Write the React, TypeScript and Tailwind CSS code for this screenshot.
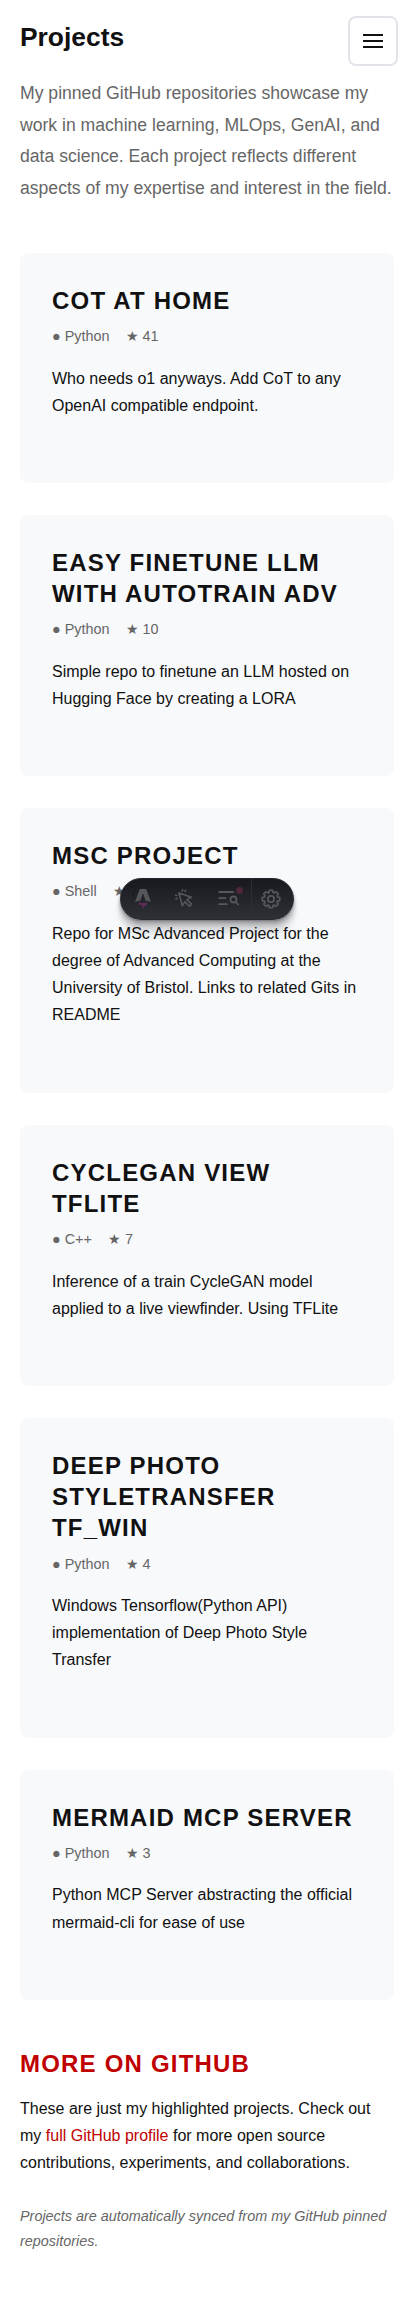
const projects = [
  { title: 'CoT at Home', language: 'Python', stars: 41, description: 'Who needs o1 anyways. Add CoT to any OpenAI compatible endpoint.' },
  { title: 'Easy finetune LLM with autotrain adv', language: 'Python', stars: 10, description: 'Simple repo to finetune an LLM hosted on Hugging Face by creating a LORA' },
  { title: 'MSc Project', language: 'Shell', stars: 7, description: 'Repo for MSc Advanced Project for the degree of Advanced Computing at the University of Bristol. Links to related Gits in README' },
  { title: 'CycleGAN View TFLite', language: 'C++', stars: 7, description: 'Inference of a train CycleGAN model applied to a live viewfinder. Using TFLite' },
  { title: 'Deep Photo StyleTransfer TF_WIN', language: 'Python', stars: 4, description: 'Windows Tensorflow(Python API) implementation of Deep Photo Style Transfer' },
  { title: 'Mermaid MCP Server', language: 'Python', stars: 3, description: 'Python MCP Server abstracting the official mermaid-cli for ease of use' },
];

type Project = (typeof projects)[number];

// Outline of an eight-toothed cog centred on (10, 10).
const cogPoints = Array.from({ length: 8 }, (_, tooth) =>
  [
    [-16, 6.9],
    [-11, 8.9],
    [11, 8.9],
    [16, 6.9],
  ]
    .map(([offset, radius]) => {
      const angle = ((tooth * 45 + offset) * Math.PI) / 180;
      return `${(10 + radius * Math.cos(angle)).toFixed(2)},${(10 + radius * Math.sin(angle)).toFixed(2)}`;
    })
    .join(' '),
).join(' ');

function ProjectCard({ title, language, stars, description }: Project) {
  return (
    <article className="rounded-lg bg-[#f8f9fb] p-8">
      <h2 className="text-2xl leading-[31.2px] font-bold tracking-[0.05em] uppercase">{title}</h2>
      <div className="mt-2 flex h-[24.48px] gap-4 text-[14.4px] leading-[24.48px] text-[#666]">
        <span>● {language}</span>
        <span>★ {stars}</span>
      </div>
      <p className="mt-4 mb-8 leading-[27.2px]">{description}</p>
    </article>
  );
}

function MenuButton() {
  return (
    <button
      aria-label="Menu"
      className="absolute top-4 right-4 flex size-[50px] flex-col items-center justify-center gap-1 rounded-lg border-2 border-[#e1e4e8] bg-white"
    >
      <span className="h-0.5 w-5 bg-[#111]" />
      <span className="h-0.5 w-5 bg-[#111]" />
      <span className="h-0.5 w-5 bg-[#111]" />
    </button>
  );
}

function Toolbar() {
  return (
    <div className="absolute top-[878px] left-[120px] flex h-[42px] w-[174px] items-center rounded-full border border-[#25282f] bg-linear-to-b from-[#13151a]/98 to-[#13151a]/88 text-[#56575a] shadow-[0_1px_2px_rgba(19,21,26,0.29),0_4px_4px_rgba(19,21,26,0.26),0_10px_6px_rgba(19,21,26,0.15),0_17px_7px_rgba(19,21,26,0.04)]">
      <div className="flex w-[44px] justify-center">
        <svg viewBox="0 0 24 24" className="size-5" aria-hidden="true">
          <path fill="#5f2c5a" d="M8.358 20.162c-1.186-1.07-1.532-3.316-1.038-4.944.856 1.026 2.043 1.352 3.272 1.535 1.897.283 3.76.177 5.522-.678.202-.098.388-.229.608-.36.166.473.209.95.151 1.437-.14 1.185-.738 2.1-1.688 2.794-.38.277-.782.525-1.175.787-1.205.804-1.531 1.747-1.078 3.119l.044.148a3.158 3.158 0 0 1-1.407-1.188 3.31 3.31 0 0 1-.544-1.815c-.004-.32-.004-.642-.048-.958-.106-.769-.472-1.113-1.161-1.133-.707-.02-1.267.411-1.415 1.09-.012.053-.028.104-.045.165z" />
          <path fill="currentColor" d="M2.397 15.717s3.24-1.575 6.49-1.575l2.451-7.565c.092-.366.36-.614.662-.614.302 0 .57.248.662.614l2.45 7.565c3.85 0 6.491 1.575 6.491 1.575L16.088.727C15.93.285 15.663 0 15.303 0H8.697c-.36 0-.615.285-.784.727l-5.516 14.99z" />
        </svg>
      </div>
      <div className="flex w-[38px] justify-center">
        <svg viewBox="0 0 20 20" className="size-5" fill="none" stroke="currentColor" strokeWidth="1.6" strokeLinecap="round" strokeLinejoin="round" aria-hidden="true">
          <path d="M4.9 3.9 8.3 16.8 10.8 12.6 15.4 17.2 17.5 15.1 12.9 10.6 17.4 8.2Z" />
          <path d="M8.4 2.3 8.5.9M11 2.5 11.6 1.5M2.8 6.5 1.5 6.2M3 9.4 1.9 9.9" />
        </svg>
      </div>
      <div className="relative flex w-[47.5px] justify-center pl-[5px]">
        <svg viewBox="0 0 22 20" className="h-5 w-[22px]" fill="none" stroke="currentColor" strokeWidth="1.8" strokeLinecap="round" aria-hidden="true">
          <path d="M1.2 3H15.2M1.2 9.1H7.6M1.2 15.2H8.8" />
          <circle cx="15.5" cy="10.5" r="3" />
          <path d="m17.7 12.8 2.3 2.7" />
        </svg>
        <span className="absolute -top-[2.5px] right-[7.5px] size-[7px] rounded-full bg-[#4e2836]" />
      </div>
      <div className="h-full w-[1.5px] bg-[#2c2e34]" />
      <div className="flex w-[37.5px] justify-center">
        <svg viewBox="0 0 20 20" className="size-5" fill="none" stroke="currentColor" strokeWidth="1.7" strokeLinejoin="round" aria-hidden="true">
          <polygon points={cogPoints} />
          <circle cx="10" cy="10" r="3.2" />
        </svg>
      </div>
    </div>
  );
}

export default function App() {
  return (
    <div className="relative min-h-[2301px] bg-white px-5 font-['Liberation_Sans',Arial,sans-serif] text-base text-[#111]">
      <MenuButton />
      <header className="pt-5">
        <h1 className="text-[26.4px] leading-[34px] font-bold">Projects</h1>
        <p className="mt-[24px] text-[17.6px] leading-[31.68px] text-[#666]">
          My pinned GitHub repositories showcase my work in machine learning, MLOps, GenAI, and data science. Each project reflects different aspects of my expertise and interest in the field.
        </p>
      </header>
      <main className="mt-[48.1px] flex flex-col gap-8">
        {projects.map((project) => (
          <ProjectCard key={project.title} {...project} />
        ))}
      </main>
      <section className="mt-12">
        <h2 className="text-2xl leading-[31.2px] font-bold tracking-[0.05em] text-[#c00000] uppercase">More on GitHub</h2>
        <p className="mt-4 leading-[27.2px]">
          These are just my highlighted projects. Check out my{' '}
          <a href="#" className="text-[#c00000]">full GitHub profile</a> for more open source contributions, experiments, and collaborations.
        </p>
        <p className="mt-[27.5px] text-[14.4px] leading-[24.48px] text-[#666] italic">
          Projects are automatically synced from my GitHub pinned repositories.
        </p>
      </section>
      <Toolbar />
    </div>
  );
}
